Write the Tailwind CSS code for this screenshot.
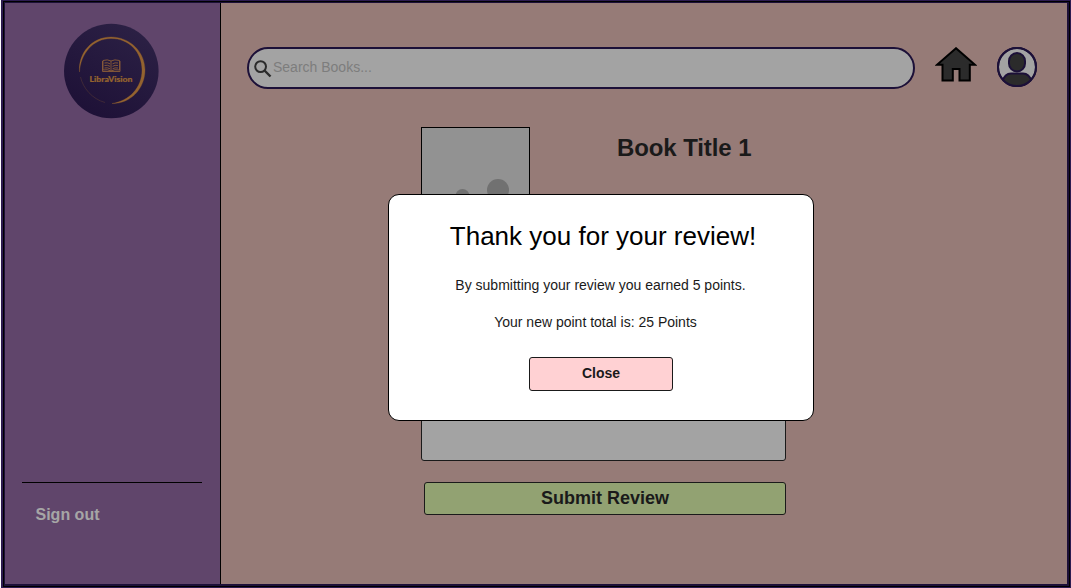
<!DOCTYPE html>
<html lang="en">
<head>
<meta charset="utf-8">
<title>LibraVision</title>
<script src="https://cdn.jsdelivr.net/npm/@tailwindcss/browser@4"></script>
</head>
<body class="bg-white font-['Liberation_Sans',Arial,sans-serif]">
<div class="relative h-[588px] w-[1071px] overflow-hidden pl-px">
  <div class="h-full border-t border-r border-b border-l-2 border-[#2c1c50]">
    <div class="h-full border border-black">
      <div class="flex h-full border-t border-r-2 border-b-2 border-l border-[#1c1038]">
        <aside class="flex w-[216px] shrink-0 flex-col border-r border-black bg-[#60456b]">
          <svg class="mt-5 ml-[58px] size-24" viewBox="0 0 96 96" fill="none">
            <defs>
              <linearGradient id="disc" x1="0.8" y1="0" x2="0.2" y2="1">
                <stop offset="0" stop-color="#2c2145"/>
                <stop offset="1" stop-color="#1d1036"/>
              </linearGradient>
            </defs>
            <circle cx="48.300" cy="48" r="47.300" fill="url(#disc)"/>
            <path d="M16.500 49C15 30 29 14 48 14C67 14 82 29 82 47C82 66 67 81 49 80.500C66 78 79 65 79 47C79 29 66 15.500 48 15.500C30 15.500 17.500 31 16.500 49Z" fill="#94632f" stroke="#94632f" stroke-width=".3"/>
            <path d="M17.500 54C20 65 29 76 42 79.500" stroke="#94632f" stroke-width=".5" opacity=".5"/>
            <g stroke="#8b5c38" stroke-width=".9">
              <path d="M40 37.500Q44.500 36 48 38Q51.500 36 56.500 37.500V47Q51.500 46 48 48Q44.500 46 40 47Z"/>
              <path d="M48 38v10M41.500 40q3-.8 5.500.8M41.500 42.500q3-.8 5.500.8M41.500 45q3-.8 5.500.8M49.500 40.800q2.500-1.500 5.500-.8M49.500 43.300q2.500-1.500 5.500-.8M49.500 45.800q2.500-1.500 5.500-.8M39.500 38v10.500h17.500V38"/>
            </g>
            <text x="26.500" y="58.500" textLength="43" lengthAdjust="spacingAndGlyphs" font-family="Lato, sans-serif" font-weight="900" font-size="7.500" fill="#94632f" stroke="#94632f" stroke-width=".2">LibraVision</text>
          </svg>
          <div class="mt-auto mr-[18px] mb-[22px] ml-[17px] h-px shrink-0 bg-black"></div>
          <a class="mb-[59px] ml-[30.500px] text-[16px] leading-5 font-bold text-[#a6a6a6]">Sign out</a>
        </aside>
        <main class="flex grow flex-col bg-[#967b77]">
          <header class="mt-11 ml-[26px] flex items-start">
            <div class="flex h-[42px] w-[668px] items-center rounded-[21px] border-2 border-[#1c1038] bg-[#a3a3a3] pl-[5px]">
              <svg class="mt-px size-[18px]" viewBox="0 0 18 18" fill="none" stroke="#2b2b2b" stroke-width="2">
                <circle cx="6.600" cy="6.600" r="5.400"/><path d="M10.500 10.500l6 6" stroke-width="2.400"/>
              </svg>
              <span class="pb-0.5 pl-px text-[14px] leading-4 text-[#7d7d7d]">Search Books...</span>
            </div>
            <svg class="ml-5 h-[36px] w-[42px]" viewBox="0 0 42 36">
              <path d="M21 1.200L2 17.800H7.500V33.500H17.800V22H24.500V33.500H34.800V17.800H40Z" fill="#2b2b2b" stroke="#000" stroke-width="2"/>
            </svg>
            <svg class="ml-5 size-10" viewBox="0 0 40 40" stroke="#1c1038" stroke-width="2">
              <clipPath id="avatar"><circle cx="20" cy="20" r="19.500"/></clipPath>
              <circle cx="20" cy="20" r="19" fill="#a3a3a3"/>
              <rect x="12" y="6" width="16" height="18.500" rx="8" fill="#2b2b2b"/>
              <path d="M5 40V35C7 29 10 26.500 14 26.500H26C30 26.500 33 29 35 35V40Z" fill="#2b2b2b" clip-path="url(#avatar)"/>
              <circle cx="20" cy="20" r="19" fill="none"/>
            </svg>
          </header>
          <section class="mt-[38px] ml-[200px] w-[365px]">
            <div class="flex">
              <svg class="h-[150px] w-[109px] border border-black bg-[#929292]" viewBox="0 0 107 148" fill="#717171">
                <circle cx="76" cy="62" r="11"/><ellipse cx="40.500" cy="68" rx="7" ry="7"/>
              </svg>
              <h1 class="mt-1.5 ml-[87px] text-[24px] leading-[30px] font-bold tracking-[-0.1px] whitespace-nowrap text-[#1a1a1a]">Book Title 1</h1>
            </div>
            <div class="mt-[84px] h-[100px] rounded-[3px] border border-[#1a1a1a] bg-[#a3a3a3]"></div>
            <button class="mt-[21px] ml-[3px] block h-[33px] w-[362px] rounded-[3px] border border-[#1a1a1a] bg-[#92a272] pb-px text-[18px] leading-[30px] font-bold text-[#1a1a1a]"><span class="block h-7 leading-7">Submit Review</span></button>
          </section>
        </main>
      </div>
    </div>
  </div>
  <div role="dialog" class="absolute top-[194px] left-[388px] flex h-[227px] w-[426px] flex-col items-center rounded-[11px] border border-black bg-white text-[#1a1a1a]">
    <h2 class="mt-[25px] ml-1 text-[26px] leading-8 whitespace-nowrap text-black">Thank you for your review!</h2>
    <p class="mt-[25px] -ml-px text-[14px] leading-4">By submitting your review you earned 5 points.</p>
    <p class="mt-[21px] -ml-[11px] text-[14px] leading-4">Your new point total is: 25 Points</p>
    <button class="mt-[27px] h-[34px] w-[144px] rounded-[3px] border border-[#1a1a1a] bg-[#ffd1d3] pb-0.5 text-[14px] leading-[30px] font-bold">Close</button>
  </div>
</div>
</body>
</html>
